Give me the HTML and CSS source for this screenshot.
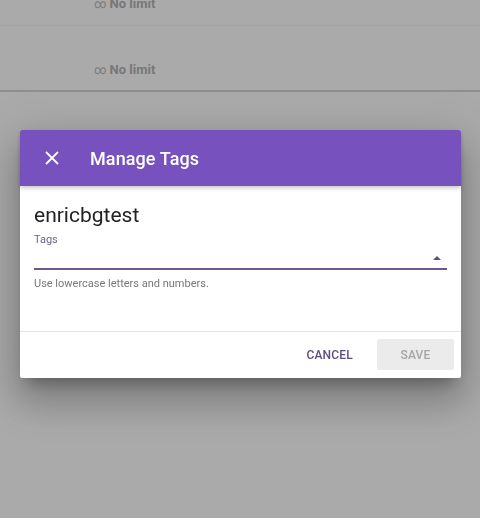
FILE: index.html
```html
<!DOCTYPE html>
<html>
<head>
<meta charset="utf-8">
<link rel="stylesheet" href="styles.css">
</head>
<body>
<div class="page">
  <div class="row row-top"><span class="limit"><span class="inf">∞</span> <b>No limit</b></span></div>
  <div class="row row-second"><span class="limit"><span class="inf">∞</span> <b>No limit</b></span></div>
</div>
<div class="overlay">
  <div class="dialog">
    <div class="dlg-header">
      <svg class="close" width="14" height="14" viewBox="0 0 14 14"><path d="M1 1 L13 13 M13 1 L1 13" stroke="#fff" stroke-width="1.8" fill="none"/></svg>
      <span class="dlg-title">Manage Tags</span>
    </div>
    <div class="dlg-body">
      <div class="name">enricbgtest</div>
      <div class="field">
        <div class="label">Tags</div>
        <div class="input-row"><span class="arrow"></span></div>
      </div>
      <div class="hint">Use lowercase letters and numbers.</div>
    </div>
    <div class="dlg-footer">
      <button class="btn cancel">CANCEL</button>
      <button class="btn save">SAVE</button>
    </div>
  </div>
</div>
</body>
</html>
```
FILE: styles.css
```css
html, body { margin: 0; padding: 0; }
body {
  width: 480px; height: 518px; overflow: hidden;
  background: #aaaaaa;
  font-family: Roboto, "Liberation Sans", sans-serif;
}
.page { display: flex; flex-direction: column; }
.row { display: flex; align-items: flex-end; padding-left: 94px; color: #7a7a7a; font-size: 13px; }
.row-top { height: 25px; border-bottom: 1px solid #a3a3a3; align-items: flex-start; }
.row-top .limit { margin-top: -4px; }
.row-second { border-bottom: 2px solid #8e8e8e; padding-bottom: 13px; box-sizing: border-box; height: 66px; }
.inf { font-size: 12px; }
.limit b { font-weight: 700; color: #777; }
.overlay {
  position: fixed; inset: 0;
  padding: 130px 19px 0 20px;
  display: flex; align-items: flex-start;
}
.dialog {
  width: 441px; background: #fff; border-radius: 2px;
  box-shadow: 0 11px 15px -7px rgba(0,0,0,.3), 0 24px 38px 3px rgba(0,0,0,.18), 0 9px 46px 8px rgba(0,0,0,.12);
  display: flex; flex-direction: column;
}
.dlg-header {
  height: 56px; background: #7751bd; color: #fff;
  display: flex; align-items: center; padding-left: 25px;
  box-shadow: 0 2px 4px rgba(0,0,0,.22);
  position: relative; z-index: 1;
  border-radius: 2px 2px 0 0;
}
.close { margin-right: 31px; }
.dlg-title { font-size: 18px; font-weight: 500; letter-spacing: 0.1px; }
.dlg-body { padding: 17px 14px 0 14px; height: 128px; border-bottom: 1px solid #e4e4e4; }
.name { font-size: 21px; color: #222; line-height: 24px; }
.label { font-size: 11px; color: #6e6385; margin-top: 6px; line-height: 13px; }
.input-row {
  height: 22px; border-bottom: 2px solid #6d5a8d;
  display: flex; justify-content: flex-end; align-items: center; padding-right: 6px;
}
.arrow { width: 0; height: 0; border-left: 4px solid transparent; border-right: 4px solid transparent; border-bottom: 4px solid #5f4d85; margin-top: 2px; }
.hint { font-size: 11px; color: #777; margin-top: 7px; }
.dlg-footer { display: flex; justify-content: flex-end; align-items: center; gap: 14px; padding: 7px 7px 8px 0; }
.btn { font-family: inherit; font-size: 12px; font-weight: 500; border: none; background: transparent; height: 31px; border-radius: 2px; letter-spacing: 0.2px; }
.cancel { color: #5d4d7e; padding: 0 10px; }
.save { width: 77px; background: #ebebeb; color: #a5a5a5; }
```
